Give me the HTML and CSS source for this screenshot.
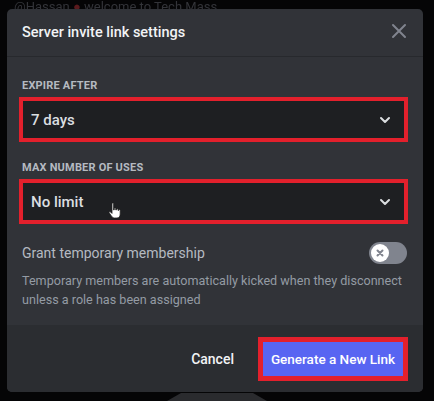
FILE: index.html
```html
<html>
<head>
  <title>Invite link settings</title>
  <link rel="stylesheet" href="styles.css">
</head>
<body>
  <div class="backdrop">
    <div class="chat-line">@Hassan <span class="red">●</span> welcome to Tech Mass</div>
    <div class="stand"></div>
  </div>

  <div class="modal">
    <div class="modal-header">
      <h1>Server invite link settings</h1>
      <svg class="close" width="16" height="16" viewBox="0 0 16 16">
        <path d="M2 2 L14 14 M14 2 L2 14" stroke="currentColor" stroke-width="2" stroke-linecap="round"/>
      </svg>
    </div>

    <div class="modal-body">
      <div class="label">EXPIRE AFTER</div>
      <div class="select marked">
        <span>7 days</span>
        <svg class="chevron" width="14" height="14" viewBox="0 0 14 14">
          <path d="M3 5 L7 9 L11 5" fill="none" stroke="currentColor" stroke-width="2" stroke-linecap="round" stroke-linejoin="round"/>
        </svg>
      </div>

      <div class="label">MAX NUMBER OF USES</div>
      <div class="select marked">
        <span>No limit</span>
        <svg class="pointer" width="14" height="18" viewBox="0 0 14 18">
          <path d="M4 1.5 C4 0.7 5.6 0.7 5.6 1.5 L5.6 8 L6.2 8 L6.2 6.5 C6.2 5.8 7.8 5.8 7.8 6.5 L7.8 8 L8.4 8 L8.4 7.2 C8.4 6.5 10 6.5 10 7.2 L10 8.4 L10.6 8.4 L10.6 8 C10.6 7.3 12.2 7.3 12.2 8 L12.2 12 C12.2 14 11 16 9 16 L6.5 16 C5 16 4.2 15 3.4 14 L1.2 10.8 C0.7 10 1.8 9.2 2.5 9.9 L4 11.4 Z" fill="#fff" stroke="#222" stroke-width="0.8"/>
        </svg>
        <svg class="chevron" width="14" height="14" viewBox="0 0 14 14">
          <path d="M3 5 L7 9 L11 5" fill="none" stroke="currentColor" stroke-width="2" stroke-linecap="round" stroke-linejoin="round"/>
        </svg>
      </div>

      <div class="toggle-row">
        <span>Grant temporary membership</span>
        <div class="switch">
          <div class="knob">
            <svg width="10" height="10" viewBox="0 0 10 10">
              <path d="M2.5 2.5 L7.5 7.5 M7.5 2.5 L2.5 7.5" stroke="#80848e" stroke-width="2" stroke-linecap="round"/>
            </svg>
          </div>
        </div>
      </div>
      <p class="hint">Temporary members are automatically kicked when they disconnect unless a role has been assigned</p>
    </div>

    <div class="modal-footer">
      <button class="btn-cancel">Cancel</button>
      <button class="btn-primary">Generate a New Link</button>
    </div>
  </div>
</body>
</html>
```

FILE: styles.css
```css
body {
  margin: 0;
  background: #050506;
  font-family: Roboto, "Noto Sans", sans-serif;
  width: 434px;
  height: 401px;
  overflow: hidden;
  position: relative;
}

.backdrop {
  height: 401px;
  display: flex;
  flex-direction: column;
  justify-content: space-between;
  align-items: center;
}

.chat-line {
  align-self: flex-start;
  margin: 0 0 0 14px;
  font-size: 13px;
  line-height: 14px;
  color: #333439;
  filter: blur(0.7px);
}

.chat-line .red {
  color: #5a1a1d;
}

.stand {
  width: 100px;
  height: 8px;
  background: #2a2b2e;
  clip-path: polygon(14% 0, 86% 0, 100% 100%, 0 100%);
}

.modal {
  position: absolute;
  left: 7px;
  top: 9px;
  width: 416px;
  height: 383px;
  background: #313338;
  border-radius: 5px;
  overflow: hidden;
  display: flex;
  flex-direction: column;
}

.modal-header {
  height: 47px;
  border-bottom: 1px solid #27292d;
  display: flex;
  align-items: center;
  justify-content: space-between;
  padding: 0 15px;
}

.modal-header h1 {
  margin: 0;
  font-size: 14.5px;
  font-weight: 500;
  color: #f2f3f5;
}

.close {
  color: #80848e;
  margin-right: 1px;
  margin-top: -4px;
}

.modal-body {
  flex: 1;
  padding: 22px 15px 0;
}

.label {
  font-size: 11px;
  font-weight: 700;
  color: #b5bac1;
  letter-spacing: 0.2px;
  line-height: 14px;
  margin-bottom: 8px;
}

.select {
  height: 37px;
  background: #1e1f22;
  display: flex;
  align-items: center;
  padding: 0 12px 0 8px;
  color: #dbdee1;
  font-size: 15px;
  font-weight: 500;
  position: relative;
}

.select span {
  flex: 1;
}

.select.marked {
  outline: 4px solid #e3202c;
  margin: 0 4px 0 1px;
}

.select + .label {
  margin-top: 23px;
}

.chevron {
  color: #dbdee1;
}

.pointer {
  position: absolute;
  left: 85px;
  top: 19px;
}

.toggle-row {
  margin-top: 22px;
  display: flex;
  align-items: center;
  justify-content: space-between;
  font-size: 14px;
  color: #b5bac1;
}

.switch {
  width: 36px;
  height: 22px;
  border-radius: 11px;
  background: #80848e;
  margin-right: 1px;
  display: flex;
  align-items: center;
  padding-left: 2px;
}

.knob {
  width: 18px;
  height: 18px;
  border-radius: 50%;
  background: #fff;
  display: flex;
  align-items: center;
  justify-content: center;
}

.hint {
  margin: 7px 0 0;
  font-size: 12.6px;
  line-height: 19px;
  color: #949ba4;
}

.modal-footer {
  height: 67px;
  background: #2b2d31;
  display: flex;
  align-items: center;
  justify-content: flex-end;
  padding: 0 20px 0 0;
  gap: 29px;
}

.btn-cancel {
  background: none;
  border: none;
  color: #f2f3f5;
  font-family: inherit;
  font-size: 14px;
  font-weight: 500;
  padding: 0;
}

.btn-primary {
  background: #5865f2;
  color: #fff;
  border: none;
  outline: 5px solid #e3202c;
  font-family: inherit;
  font-size: 13.5px;
  font-weight: 500;
  height: 34px;
  width: 140px;
  padding: 0;
}
```
